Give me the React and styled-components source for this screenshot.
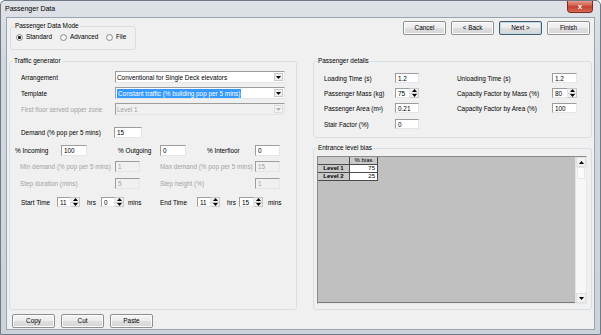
import React from "react";
import styled, { createGlobalStyle } from "styled-components";

const GlobalStyle = createGlobalStyle`
  html, body { margin: 0; padding: 0; background: #fff; }
  body { font-family: "Liberation Sans", Arial, sans-serif; font-size: 6.4px; color: #000; }
`;

const Window = styled.div`
  width: 601px;
  height: 335px;
  box-sizing: border-box;
  display: flex;
  flex-direction: column;
  background: linear-gradient(#dfe3e7, #d2d8de 60px, #ccd3d9);
  border: 1px solid #6f7a86;
  border-radius: 5px 5px 0 0;
  overflow: hidden;
`;
const TitleBar = styled.div`
  height: 16px;
  flex-shrink: 0;
  display: flex;
  align-items: flex-start;
  justify-content: space-between;
  padding-left: 4px;
`;
const Title = styled.span`
  font-size: 7px;
  line-height: 15px;
`;
const CloseBtn = styled.div`
  width: 26px;
  height: 13px;
  margin-right: 7px;
  margin-top: -1px;
  box-sizing: border-box;
  border: 1px solid #7d2a22;
  border-top: none;
  border-radius: 0 0 4px 4px;
  background: linear-gradient(#e9a79b, #d2604f 45%, #c2402f 55%, #d66a55);
  color: #fff;
  font-size: 8px;
  font-weight: bold;
  display: flex;
  align-items: center;
  justify-content: center;
`;
const Client = styled.div`
  flex: 1;
  margin: 0 5px 4px 5px;
  border: 1px solid #9aa4ae;
  background: #f0f0f0;
  display: flex;
  flex-direction: column;
`;
const TopBar = styled.div`
  height: 39px;
  display: flex;
  justify-content: space-between;
  align-items: flex-start;
`;
const Group = styled.fieldset`
  box-sizing: border-box;
  margin: 0;
  padding: 0;
  min-width: 0;
  border: 1px solid #d5dfe5;
  border-radius: 3px;
  width: ${(p) => p.$w}px;
  height: ${(p) => p.$h}px;
  flex-shrink: 0;
`;
const Legend = styled.legend`
  margin-left: 3px;
  padding: 0 1px;
  font-size: 6.4px;
  line-height: 8px;
`;
const ModeGroup = styled(Group)`
  margin: 4px 0 0 3px;
`;
const RadioRow = styled.div`
  display: flex;
  margin-top: 3px;
  height: 8px;
  padding-left: 5px;
  align-items: center;
`;
const RadioItem = styled.label`
  display: flex;
  align-items: center;
  gap: 3px;
  width: ${(p) => p.$w}px;
  line-height: 8px;
`;
const RadioDot = styled.span`
  width: 5px;
  height: 5px;
  border-radius: 50%;
  border: 1px solid #8e8f8f;
  background: ${(p) =>
    p.$on
      ? "radial-gradient(circle, #222 0 1.3px, #f6f6f6 1.8px)"
      : "radial-gradient(circle, #fff, #e4e4e4)"};
`;
const ButtonRow = styled.div`
  display: flex;
  gap: ${(p) => p.$gap}px;
  margin: ${(p) => p.$m};
`;
const Button = styled.div`
  width: 43px;
  height: 14px;
  box-sizing: border-box;
  border: 1px solid ${(p) => (p.$default ? "#4a5a6a" : "#8e8f8f")};
  border-radius: 2px;
  background: linear-gradient(#f4f4f4 0%, #ececec 48%, #dedede 52%, #d6d6d6 100%);
  box-shadow: inset 0 0 0 1px ${(p) => (p.$default ? "#b8dcef" : "#fcfcfc")};
  display: flex;
  align-items: center;
  justify-content: center;
  line-height: 12px;
`;
const Main = styled.div`
  height: 253px;
  display: flex;
`;
const TrafficGroup = styled(Group)`
  margin-left: 2px;
`;
const RightColumn = styled.div`
  margin-left: 16px;
  width: 279px;
  display: flex;
  flex-direction: column;
`;
const BiasGroup = styled(Group)`
  margin-top: 6px;
`;
const Inner = styled.div`
  padding-left: ${(p) => p.$pl}px;
  display: flex;
  flex-direction: column;
`;
const Row = styled.div`
  display: flex;
  align-items: stretch;
  height: ${(p) => p.$h}px;
  margin-top: ${(p) => p.$mt}px;
`;
const FieldLabel = styled.span`
  width: ${(p) => p.$w}px;
  margin-left: ${(p) => p.$ml || 0}px;
  flex-shrink: 0;
  white-space: nowrap;
  display: flex;
  align-items: center;
  color: ${(p) => (p.$disabled ? "#a3a3a3" : "#000")};
`;
const TextBox = styled.div`
  width: ${(p) => (p.$w ? `${p.$w}px` : "auto")};
  flex: ${(p) => (p.$w ? "none" : 1)};
  box-sizing: border-box;
  border: 1px solid;
  border-color: #9c9c9c #e2e6ea #e2e6ea #9c9c9c;
  background: ${(p) => (p.$disabled ? "#f0f0f0" : "#fff")};
  color: ${(p) => (p.$disabled ? "#a3a3a3" : "#000")};
  padding-left: 2px;
  display: flex;
  align-items: center;
  white-space: nowrap;
  overflow: hidden;
`;
const ComboBox = styled.div`
  width: 170px;
  box-sizing: border-box;
  display: flex;
  border: 1px solid;
  border-color: #9c9c9c #e2e6ea #e2e6ea #9c9c9c;
  background: ${(p) => (p.$disabled ? "#f0f0f0" : "#fff")};
  color: ${(p) => (p.$disabled ? "#a3a3a3" : "#000")};
`;
const ComboText = styled.div`
  flex: 1;
  padding-left: 1px;
  display: flex;
  align-items: center;
  white-space: nowrap;
`;
const Highlight = styled.span`
  background: #3399ff;
  color: #fff;
  padding: 0 1px;
  line-height: 9px;
`;
const ArrowBox = styled.div`
  width: 9px;
  margin: 1px;
  box-sizing: border-box;
  border: 1px solid ${(p) => (p.$disabled ? "#dcdcdc" : "#c8c8c8")};
  background: ${(p) => (p.$disabled ? "#f4f4f4" : "#f2f2f2")};
  display: flex;
  align-items: center;
  justify-content: center;
`;
const Spin = styled.div`
  width: ${(p) => p.$w}px;
  display: flex;
  flex-shrink: 0;
`;
const SpinButtons = styled.div`
  width: 8px;
  display: flex;
  flex-direction: column;
  border: 1px solid #c8c8c8;
  border-left: none;
  background: #f0f0f0;
`;
const SpinHalf = styled.div`
  flex: 1;
  display: flex;
  align-items: center;
  justify-content: center;
  border-top: ${(p) => (p.$bottom ? "1px solid #c8c8c8" : "none")};
`;
const GridFrame = styled.div`
  margin: 4px 0 0 3px;
  width: 270px;
  height: 148px;
  box-sizing: border-box;
  border: 1px solid;
  border-color: #8a8a8a #e8e8e8 #e8e8e8 #8a8a8a;
  display: flex;
`;
const GridArea = styled.div`
  flex: 1;
  background: #c0c0c0;
  border-bottom: 1px solid #7a7a7a;
`;
const BiasTable = styled.div`
  display: grid;
  grid-template-columns: 32px 28px;
  grid-auto-rows: 8px;
`;
const Cell = styled.div`
  box-sizing: border-box;
  border-right: 1px solid #4a4a4a;
  border-bottom: 1px solid #4a4a4a;
  background: ${(p) => (p.$head ? "#c9c9c9" : "#fff")};
  font-weight: ${(p) => (p.$bold ? "bold" : "normal")};
  display: flex;
  align-items: center;
  justify-content: ${(p) => p.$align || "center"};
  padding: 0 2px;
  font-size: 6px;
  line-height: 7px;
`;
const ScrollBar = styled.div`
  width: 10px;
  background: #f7f7f7;
  border-left: 1px solid #e4e4e4;
  display: flex;
  flex-direction: column;
  justify-content: space-between;
`;
const ScrollArrow = styled.div`
  height: 8px;
  display: flex;
  align-items: center;
  justify-content: center;
  background: #f2f2f2;
  border: 1px solid #e0e0e0;
`;
const Thumb = styled.div`
  height: 10px;
  margin: 0 1px;
  background: #fbfbfb;
  border: 1px solid #e6e6e6;
`;
const ScrollTrack = styled.div`
  flex: 1;
`;
const BottomBar = styled.div`
  margin-top: 4px;
  padding-left: 5px;
  display: flex;
  gap: 6px;
`;

const Tri = ({ up, color = "#000" }) => (
  <svg width="5" height="3" viewBox="0 0 5 3">
    <polygon points={up ? "0,3 5,3 2.5,0" : "0,0 5,0 2.5,3"} fill={color} />
  </svg>
);

const Combo = ({ children, disabled }) => (
  <ComboBox $disabled={disabled}>
    <ComboText>{children}</ComboText>
    <ArrowBox $disabled={disabled}>
      <Tri color={disabled ? "#b0b0b0" : "#000"} />
    </ArrowBox>
  </ComboBox>
);

const SpinBox = ({ value, w }) => (
  <Spin $w={w}>
    <TextBox>{value}</TextBox>
    <SpinButtons>
      <SpinHalf>
        <Tri up />
      </SpinHalf>
      <SpinHalf $bottom>
        <Tri />
      </SpinHalf>
    </SpinButtons>
  </Spin>
);

export default function App() {
  return (
    <>
      <GlobalStyle />
      <Window>
        <TitleBar>
          <Title>Passenger Data</Title>
          <CloseBtn>x</CloseBtn>
        </TitleBar>
        <Client>
          <TopBar>
            <ModeGroup $w={126} $h={28}>
              <Legend>Passenger Data Mode</Legend>
              <RadioRow>
                <RadioItem $w={44}>
                  <RadioDot $on />
                  Standard
                </RadioItem>
                <RadioItem $w={46}>
                  <RadioDot />
                  Advanced
                </RadioItem>
                <RadioItem $w={24}>
                  <RadioDot />
                  File
                </RadioItem>
              </RadioRow>
            </ModeGroup>
            <ButtonRow $gap={5} $m="3px 4px 0 0">
              <Button>Cancel</Button>
              <Button>&lt; Back</Button>
              <Button $default>Next &gt;</Button>
              <Button>Finish</Button>
            </ButtonRow>
          </TopBar>

          <Main>
            <TrafficGroup $w={288} $h={253}>
              <Legend>Traffic generator</Legend>
              <Inner $pl={11}>
                <Row $h={12} $mt={6}>
                  <FieldLabel $w={94}>Arrangement</FieldLabel>
                  <Combo>Conventional for Single Deck elevators</Combo>
                </Row>
                <Row $h={12} $mt={4}>
                  <FieldLabel $w={94}>Template</FieldLabel>
                  <Combo>
                    <Highlight>Constant traffic (% building pop per 5 mins)</Highlight>
                  </Combo>
                </Row>
                <Row $h={12} $mt={4}>
                  <FieldLabel $w={94} $disabled>
                    First floor served upper zone
                  </FieldLabel>
                  <Combo disabled>Level 1</Combo>
                </Row>
                <Row $h={11} $mt={12}>
                  <FieldLabel $w={93}>Demand (% pop per 5 mins)</FieldLabel>
                  <TextBox $w={28}>15</TextBox>
                </Row>
                <Row $h={11} $mt={7}>
                  <FieldLabel $w={46} $ml={-6}>% Incoming</FieldLabel>
                  <TextBox $w={26}>100</TextBox>
                  <FieldLabel $w={42} $ml={31}>% Outgoing</FieldLabel>
                  <TextBox $w={26}>0</TextBox>
                  <FieldLabel $w={48} $ml={21}>% Interfloor</FieldLabel>
                  <TextBox $w={25}>0</TextBox>
                </Row>
                <Row $h={11} $mt={5}>
                  <FieldLabel $w={95} $ml={-1} $disabled>
                    Min demand (% pop per 5 mins)
                  </FieldLabel>
                  <TextBox $w={25} $disabled>1</TextBox>
                  <FieldLabel $w={95} $ml={20} $disabled>
                    Max demand (% pop per 5 mins)
                  </FieldLabel>
                  <TextBox $w={25} $disabled>15</TextBox>
                </Row>
                <Row $h={11} $mt={6}>
                  <FieldLabel $w={95} $ml={-1} $disabled>
                    Step duration (mins)
                  </FieldLabel>
                  <TextBox $w={25} $disabled>5</TextBox>
                  <FieldLabel $w={95} $ml={20} $disabled>
                    Step height (%)
                  </FieldLabel>
                  <TextBox $w={25} $disabled>1</TextBox>
                </Row>
                <Row $h={10} $mt={8}>
                  <FieldLabel $w={36}>Start Time</FieldLabel>
                  <SpinBox w={23} value="11" />
                  <FieldLabel $w={14} $ml={7}>hrs</FieldLabel>
                  <SpinBox w={23} value="0" />
                  <FieldLabel $w={32} $ml={4}>mins</FieldLabel>
                  <FieldLabel $w={37}>End Time</FieldLabel>
                  <SpinBox w={23} value="11" />
                  <FieldLabel $w={12} $ml={7}>hrs</FieldLabel>
                  <SpinBox w={24} value="15" />
                  <FieldLabel $w={20} $ml={5}>mins</FieldLabel>
                </Row>
              </Inner>
            </TrafficGroup>

            <RightColumn>
              <Group $w={279} $h={81}>
                <Legend>Passenger details</Legend>
                <Inner $pl={10}>
                  <Row $h={10} $mt={8}>
                    <FieldLabel $w={71}>Loading Time (s)</FieldLabel>
                    <TextBox $w={24}>1.2</TextBox>
                    <FieldLabel $w={95} $ml={38}>Unloading Time (s)</FieldLabel>
                    <TextBox $w={25}>1.2</TextBox>
                  </Row>
                  <Row $h={10} $mt={5}>
                    <FieldLabel $w={71}>Passenger Mass (kg)</FieldLabel>
                    <SpinBox w={24} value="75" />
                    <FieldLabel $w={95} $ml={38}>Capacity Factor by Mass (%)</FieldLabel>
                    <SpinBox w={25} value="80" />
                  </Row>
                  <Row $h={10} $mt={5}>
                    <FieldLabel $w={71}>Passenger Area (m²)</FieldLabel>
                    <TextBox $w={24}>0.21</TextBox>
                    <FieldLabel $w={95} $ml={38}>Capacity Factor by Area (%)</FieldLabel>
                    <TextBox $w={25}>100</TextBox>
                  </Row>
                  <Row $h={10} $mt={6}>
                    <FieldLabel $w={71}>Stair Factor (%)</FieldLabel>
                    <TextBox $w={24}>0</TextBox>
                  </Row>
                </Inner>
              </Group>

              <BiasGroup $w={279} $h={166}>
                <Legend>Entrance level bias</Legend>
                <GridFrame>
                  <GridArea>
                    <BiasTable>
                      <Cell $head />
                      <Cell $head>% bias</Cell>
                      <Cell $head $bold>Level 1</Cell>
                      <Cell $align="flex-end">75</Cell>
                      <Cell $head $bold>Level 2</Cell>
                      <Cell $align="flex-end">25</Cell>
                    </BiasTable>
                  </GridArea>
                  <ScrollBar>
                    <ScrollArrow>
                      <Tri up />
                    </ScrollArrow>
                    <Thumb />
                    <ScrollTrack />
                    <ScrollArrow>
                      <Tri />
                    </ScrollArrow>
                  </ScrollBar>
                </GridFrame>
              </BiasGroup>
            </RightColumn>
          </Main>

          <BottomBar>
            <Button>Copy</Button>
            <Button>Cut</Button>
            <Button>Paste</Button>
          </BottomBar>
        </Client>
      </Window>
    </>
  );
}
